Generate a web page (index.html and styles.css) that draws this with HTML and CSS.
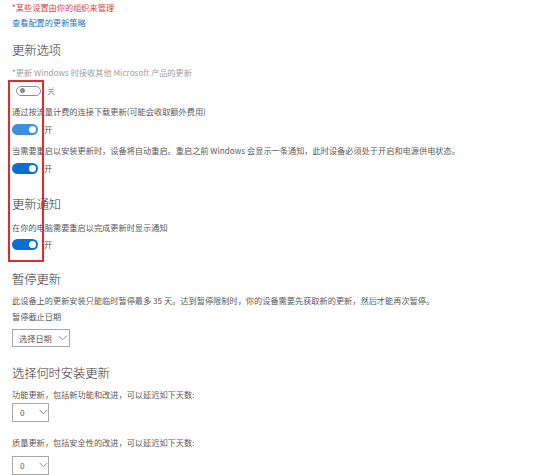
FILE: index.html
```html
<!DOCTYPE html>
<html lang="zh-CN">
<head>
<meta charset="utf-8">
<title>Windows 更新 - 高级选项</title>
<link rel="stylesheet" href="styles.css">
</head>
<body>
<div class="page">
  <p class="line red">*某些设置由你的组织来管理</p>
  <a class="line link" href="#">查看配置的更新策略</a>

  <h2 class="heading h-first">更新选项</h2>
  <p class="line muted d1">*更新 Windows 时接收其他 Microsoft 产品的更新</p>
  <div class="toggle-row off-row">
    <span class="toggle off"><span class="knob"></span></span>
    <span class="state state-off">关</span>
  </div>
  <p class="line d2">通过按流量计费的连接下载更新(可能会收取额外费用)</p>
  <div class="toggle-row">
    <span class="toggle on hover"><span class="knob"></span></span>
    <span class="state">开</span>
  </div>
  <p class="line d2">当需要重启以安装更新时，设备将自动重启。重启之前 Windows 会显示一条通知，此时设备必须处于开启和电源供电状态。</p>
  <div class="toggle-row">
    <span class="toggle on"><span class="knob"></span></span>
    <span class="state">开</span>
  </div>

  <h2 class="heading h2">更新通知</h2>
  <p class="line d4">在你的电脑需要重启以完成更新时显示通知</p>
  <div class="toggle-row tr4">
    <span class="toggle on"><span class="knob"></span></span>
    <span class="state">开</span>
  </div>

  <h2 class="heading h3">暂停更新</h2>
  <p class="line d5">此设备上的更新安装只能临时暂停最多 35 天。达到暂停限制时，你的设备需要先获取新的更新，然后才能再次暂停。</p>
  <p class="line d6">暂停截止日期</p>
  <div class="select sel-date">
    <span>选择日期</span>
    <svg class="chev" width="9" height="6" viewBox="0 0 9 6"><polyline points="0.5,0.8 4.5,4.8 8.5,0.8" fill="none" stroke="#8a8a8a" stroke-width="1"/></svg>
  </div>

  <h2 class="heading h4">选择何时安装更新</h2>
  <p class="line d7">功能更新，包括新功能和改进，可以延迟如下天数:</p>
  <div class="select sel-num s1">
    <span>0</span>
    <svg class="chev" width="9" height="6" viewBox="0 0 9 6"><polyline points="0.5,0.8 4.5,4.8 8.5,0.8" fill="none" stroke="#8a8a8a" stroke-width="1"/></svg>
  </div>
  <p class="line d8">质量更新，包括安全性的改进，可以延迟如下天数:</p>
  <div class="select sel-num s2">
    <span>0</span>
    <svg class="chev" width="9" height="6" viewBox="0 0 9 6"><polyline points="0.5,0.8 4.5,4.8 8.5,0.8" fill="none" stroke="#8a8a8a" stroke-width="1"/></svg>
  </div>
</div>
<div class="annot"></div>
</body>
</html>
```
FILE: styles.css
```css
html, body {
  margin: 0;
  padding: 0;
  background: #ffffff;
}
body {
  width: 550px;
  height: 475px;
  overflow: hidden;
  position: relative;
  font-family: "Noto Sans CJK SC", "Noto Sans", sans-serif;
  color: #5a5a5a;
}
.page {
  padding-left: 12px;
  display: flex;
  flex-direction: column;
  align-items: flex-start;
}
.line {
  margin: 0;
  font-size: 8.2px;
  line-height: 15px;
  height: 15px;
  white-space: nowrap;
}
.red { color: #e0443a; }
.link { color: #2a72c4; text-decoration: none; }
.muted { color: #a0a0a0; }

.heading {
  margin: 0;
  font-size: 12.5px;
  font-weight: 300;
  line-height: 18px;
  height: 18px;
  color: #333333;
  letter-spacing: -0.3px;
}
.h-first { margin-top: 11px; }
.d1 { margin-top: 6px; }
.toggle-row {
  margin-top: 3px;
  height: 15px;
  display: flex;
  align-items: center;
  gap: 6px;
}
.off-row { padding-left: 4px; }
.d2 { margin-top: 6px; }

.toggle {
  width: 26px;
  height: 11px;
  border-radius: 6px;
  box-sizing: border-box;
  display: flex;
  align-items: center;
  padding: 0 2px;
}
.toggle .knob {
  width: 6px;
  height: 6px;
  border-radius: 50%;
}
.toggle.off {
  width: 25px;
  height: 10px;
  border: 1.2px solid #8c8c8c;
  background: #fff;
  padding: 0 3px;
}
.toggle.off .knob { background: #8c8c8c; width: 5px; height: 5px; }
.toggle.on {
  background: #0a6fd1;
  justify-content: flex-end;
}
.toggle.on.hover { background: #3c8fe3; }
.toggle.on .knob { background: #ffffff; width: 7px; height: 7px; }
.state { font-size: 8.2px; line-height: 15px; color: #5a5a5a; }
.state.state-off { color: #a8a8a8; }

.h2 { margin-top: 18.5px; }
.d4 { margin-top: 7.5px; }
.tr4 { margin-top: 2px; }
.h3 { margin-top: 17.5px; }
.d5 { margin-top: 5.5px; }
.d6 { margin-top: 1px; }

.select {
  box-sizing: border-box;
  border: 1px solid #a8a8a8;
  display: flex;
  align-items: center;
  font-size: 8.2px;
  color: #5a5a5a;
}
.sel-date {
  margin-top: 4.5px;
  width: 58px;
  height: 18px;
  padding-left: 6px;
  gap: 6px;
}
.sel-num {
  width: 37px;
  height: 19px;
  padding-left: 7px;
  gap: 14px;
}
.chev { display: block; }
.h4 { margin-top: 17px; }
.d7 { margin-top: 5.5px; }
.s1 { margin-top: 0.5px; }
.d8 { margin-top: 13.5px; }
.s2 { margin-top: 5.5px; }

.annot {
  position: absolute;
  left: 8px;
  top: 80px;
  width: 36px;
  height: 182px;
  box-sizing: border-box;
  border: 2px solid #e02a2f;
}
```
